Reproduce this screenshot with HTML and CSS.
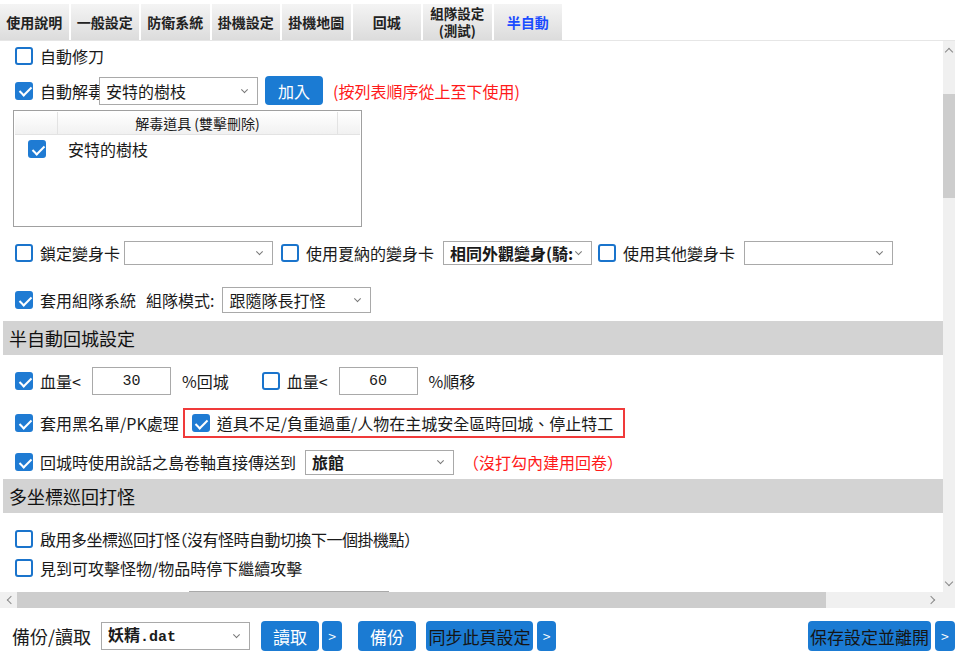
FILE: index.html
```html
<!DOCTYPE html>
<html lang="zh-Hant">
<head>
  <meta charset="UTF-8" />
  <meta name="viewport" content="width=device-width, initial-scale=1.0"/>
  <title>半自動</title>
  <link rel="stylesheet" href="styles.css">
</head>
<body>
  <div class="tabs">
    <div class="tab">使用說明</div>
    <div class="tab">一般設定</div>
    <div class="tab">防衛系統</div>
    <div class="tab">掛機設定</div>
    <div class="tab">掛機地圖</div>
    <div class="tab">回城</div>
    <div class="tab two-line"><span>組隊設定</span><span>(測試)</span></div>
    <div class="tab active">半自動</div>
  </div>

  <div class="viewport">
    <div class="content">
      <div class="row row-knife">
        <span class="cb"></span><span class="lbl">自動修刀</span>
      </div>

      <div class="row row-detox">
        <span class="cb on"></span><span class="lbl lbl-detox">自動解毒</span>
        <div class="select sel-detox"><span class="sel-text">安特的樹枝</span></div>
        <div class="btn btn-add">加入</div>
        <span class="note">(按列表順序從上至下使用)</span>
      </div>

      <div class="listbox">
        <div class="list-head">
          <div class="col-check"></div>
          <div class="col-name">解毒道具 (雙擊刪除)</div>
          <div class="col-rest"></div>
        </div>
        <div class="list-item">
          <span class="cb on"></span><span class="item-name">安特的樹枝</span>
        </div>
      </div>

      <div class="row row-morph">
        <span class="cb"></span><span class="lbl">鎖定變身卡</span>
        <div class="select sel-small sel-lock"></div>
        <span class="cb gap-cb"></span><span class="lbl">使用夏納的變身卡</span>
        <div class="select sel-small sel-shana"><span class="sel-text bold">相同外觀變身(騎:</span></div>
        <span class="cb gap-cb2"></span><span class="lbl">使用其他變身卡</span>
        <div class="select sel-small sel-other"></div>
      </div>

      <div class="row row-party">
        <span class="cb on"></span><span class="lbl">套用組隊系統</span>
        <span class="lbl party-mode">組隊模式:</span>
        <div class="select sel-party"><span class="sel-text">跟隨隊長打怪</span></div>
      </div>

      <div class="section">半自動回城設定</div>

      <div class="row row-hp">
        <span class="cb on"></span><span class="lbl">血量&lt;</span>
        <input class="num" value="30">
        <span class="lbl unit">%回城</span>
        <span class="cb hp-cb"></span><span class="lbl">血量&lt;</span>
        <input class="num" value="60">
        <span class="lbl unit">%順移</span>
      </div>

      <div class="row row-black">
        <span class="cb on"></span><span class="lbl">套用黑名單/PK處理</span>
        <div class="alert">
          <span class="cb on"></span><span class="lbl">道具不足/負重過重/人物在主城安全區時回城、停止特工</span>
        </div>
      </div>

      <div class="row row-scroll">
        <span class="cb on"></span><span class="lbl">回城時使用說話之島卷軸直接傳送到</span>
        <div class="select sel-inn"><span class="sel-text bold">旅館</span></div>
        <span class="note note-inn">（沒打勾內建用回卷）</span>
      </div>

      <div class="section">多坐標巡回打怪</div>

      <div class="row row-multi">
        <span class="cb"></span><span class="lbl lbl-tight">啟用多坐標巡回打怪（沒有怪時自動切換下一個掛機點）</span>
      </div>
      <div class="row row-stop">
        <span class="cb"></span><span class="lbl">見到可攻擊怪物/物品時停下繼續攻擊</span>
      </div>
      <div class="row row-hidden">
        <div class="select sel-hidden"></div>
      </div>
    </div>

    <div class="vscroll">
      <div class="arrow"><span class="chev up"></span></div>
      <div class="vthumb"></div>
      <div class="arrow arrow-bottom"><span class="chev down"></span></div>
    </div>
  </div>

  <div class="hscroll">
    <div class="harrow"><span class="chev left"></span></div>
    <div class="hthumb"></div>
    <div class="harrow harrow-right"><span class="chev right"></span></div>
  </div>

  <div class="footer">
    <span class="foot-label">備份/讀取</span>
    <div class="select sel-file"><span class="sel-text bold">妖精<span class="mono">.dat</span></span></div>
    <div class="btn btn-load">讀取</div>
    <div class="btn btn-more">&gt;</div>
    <div class="btn btn-backup">備份</div>
    <div class="btn btn-sync">同步此頁設定</div>
    <div class="btn btn-more btn-more-sync">&gt;</div>
    <div class="btn btn-save">保存設定並離開</div>
    <div class="btn btn-more btn-more-save">&gt;</div>
  </div>
</body>
</html>
```

FILE: styles.css
```css
* {
  box-sizing: border-box;
}

body {
  margin: 0;
  width: 955px;
  height: 657px;
  overflow: hidden;
  background: #fff;
  font-family: "Noto Sans CJK TC", "Noto Sans", sans-serif;
  font-size: 16px;
  color: #1a1a1a;
}

/* tab strip */
.tabs {
  display: flex;
  height: 40px;
  padding-top: 4px;
}

.tab {
  width: 68.5px;
  height: 36px;
  margin-right: 2px;
  background: linear-gradient(#f4f4f4, #dcdcdc);
  display: flex;
  align-items: center;
  justify-content: center;
  text-align: center;
  font-size: 14px;
  font-weight: bold;
  line-height: 17px;
  color: #222;
}

.tab.two-line {
  flex-direction: column;
  font-size: 13.5px;
}

.tab.active {
  color: #1a4cff;
}

/* scrolling panel */
.viewport {
  display: flex;
  height: 552px;
  border-top: 1px solid #e6e6e6;
}

.content {
  flex: 1;
  overflow: hidden;
}

.row {
  display: flex;
  align-items: center;
  padding-left: 15px;
  white-space: nowrap;
}

.row-knife { height: 30px; }
.row-detox { height: 39px; }
.row-morph { height: 52px; }
.row-party { height: 42px; }
.row-hp { height: 52px; }
.row-black { height: 32px; }
.row-scroll { height: 40px; padding-top: 6px; }
.row-multi { height: 40px; padding-top: 12px; }
.row-stop { height: 30px; }
.row-hidden { height: 40px; padding-top: 8px; align-items: flex-start; }

.lbl {
  line-height: 20px;
  margin-left: 7px;
}

.lbl-tight {
  font-feature-settings: "halt";
  letter-spacing: -0.5px;
}

.cb {
  flex: none;
  width: 18px;
  height: 18px;
  border: 2px solid #1a74cc;
  border-radius: 3px;
  background: #fff;
  position: relative;
}

.cb.on {
  background: #1f7bd3;
  border-color: #1f7bd3;
}

.cb.on::after {
  content: '';
  position: absolute;
  left: 4.5px;
  top: 0.5px;
  width: 5px;
  height: 10px;
  border: solid #fff;
  border-width: 0 2.5px 2.5px 0;
  transform: rotate(45deg);
}

.select {
  flex: none;
  position: relative;
  display: flex;
  align-items: center;
  height: 24px;
  border: 1px solid #a9a9a9;
  background: #fff;
  padding: 0 22px 0 6px;
  overflow: hidden;
}

.select::after {
  content: '';
  position: absolute;
  right: 10px;
  top: 50%;
  width: 4px;
  height: 4px;
  border-right: 1px solid #777;
  border-bottom: 1px solid #777;
  transform: translateY(-75%) rotate(45deg);
}

.sel-text {
  line-height: 20px;
  white-space: nowrap;
}

.bold {
  font-weight: bold;
}

.mono {
  font-family: "Liberation Mono", monospace;
  font-size: 15px;
}

.lbl-detox {
  width: 59px;
}

.sel-detox {
  width: 159px;
  height: 28px;
}

.btn {
  flex: none;
  display: flex;
  align-items: center;
  justify-content: center;
  height: 30px;
  border-radius: 4px;
  background: #1b7bd3;
  color: #fff;
  font-size: 17px;
}

.btn-add {
  width: 58px;
  height: 29px;
  margin-left: 7px;
  font-size: 16px;
}

.note {
  margin-left: 10px;
  color: #ff1a1a;
}

/* poison item list */
.listbox {
  margin-left: 13px;
  width: 349px;
  height: 117px;
  border: 1px solid #a0a0a0;
  padding: 1px;
}

.list-head {
  display: flex;
  height: 23px;
  background: linear-gradient(#fff, #f1f1f1);
  border-bottom: 1px solid #e3e3e3;
  font-size: 14px;
  line-height: 22px;
}

.col-check {
  width: 43px;
  border-right: 1px solid #e3e3e3;
}

.col-name {
  width: 280px;
  border-right: 1px solid #e3e3e3;
  text-align: center;
}

.col-rest {
  flex: 1;
}

.list-item {
  display: flex;
  align-items: center;
  height: 28px;
  padding-left: 13px;
}

.item-name {
  margin-left: 22px;
}

.sel-small {
  width: 149px;
}

.sel-lock { margin-left: 4px; }
.gap-cb { margin-left: 8px; }
.sel-shana { margin-left: 9px; padding-right: 16px; }
.gap-cb2 { margin-left: 6px; }
.sel-other { margin-left: 9px; }

.party-mode {
  margin-left: 10px;
}

.sel-party {
  width: 149px;
  height: 26px;
  margin-left: 8px;
}

.section {
  margin-left: 3px;
  height: 34px;
  padding-left: 6px;
  background: #d3d3d3;
  font-size: 18px;
  line-height: 34px;
  color: #111;
}

.num {
  width: 79px;
  height: 28px;
  margin-left: 11px;
  border: 1px solid #a9a9a9;
  font-family: "Liberation Mono", monospace;
  font-size: 15px;
  text-align: center;
  color: #1a1a1a;
  padding: 0;
}

.unit {
  margin-left: 11px;
}

.hp-cb {
  margin-left: 33px;
}

.alert {
  display: flex;
  align-items: center;
  height: 30px;
  margin-left: 4px;
  padding: 0 10px 0 7px;
  border: 2px solid #f03a3a;
}

.sel-inn {
  width: 149px;
  height: 25px;
  margin-left: 9px;
}

.note-inn {
  margin-left: 9px;
}

.sel-hidden {
  width: 200px;
  margin-left: 174px;
  height: 28px;
}

/* fake scrollbars */
.vscroll {
  width: 12px;
  background: #f0f0f0;
  display: flex;
  flex-direction: column;
}

.arrow {
  height: 17px;
  display: flex;
  align-items: center;
  justify-content: center;
}

.arrow-bottom {
  margin-top: auto;
}

.vthumb {
  margin-top: 36px;
  height: 104px;
  background: #cdcdcd;
}

.chev {
  width: 6px;
  height: 6px;
  border-left: 1px solid #8a8a8a;
  border-top: 1px solid #8a8a8a;
}

.chev.up { transform: translateY(2px) rotate(45deg); }
.chev.down { transform: translateY(-2px) rotate(225deg); }
.chev.left { transform: translateX(2px) rotate(-45deg); }
.chev.right { transform: translateX(-2px) rotate(135deg); }

.hscroll {
  display: flex;
  height: 16px;
  background: #f0f0f0;
}

.harrow {
  width: 17px;
  display: flex;
  align-items: center;
  justify-content: center;
}

.harrow-right {
  margin-left: auto;
  margin-right: 12px;
  width: 20px;
}

.hthumb {
  width: 809px;
  background: #cdcdcd;
}

/* bottom bar */
.footer {
  display: flex;
  align-items: center;
  height: 49px;
  padding: 7px 0 0 12px;
}

.foot-label {
  font-size: 18px;
  line-height: 22px;
}

.sel-file {
  width: 149px;
  height: 28px;
  margin-left: 10px;
}

.btn-load { width: 58px; margin-left: 11px; }
.btn-more { width: 20px; margin-left: 3px; font-size: 14px; }
.btn-backup { width: 58px; margin-left: 16px; }
.btn-sync { width: 107px; margin-left: 10px; color: #151515; }
.btn-more-sync { width: 19px; margin-left: 4px; }
.btn-save { width: 123px; margin-left: auto; color: #151515; }
.btn-more-save { margin-left: 4px; }
```
